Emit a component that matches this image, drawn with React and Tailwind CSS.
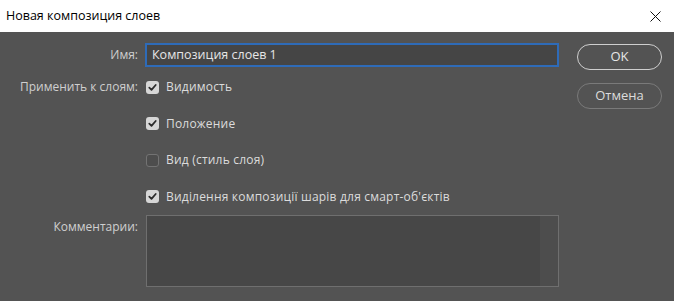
import { useState } from "react";

const OPTIONS = [
  { label: "Видимость", checked: true },
  { label: "Положение", checked: true },
  { label: "Вид (стиль слоя)", checked: false },
  { label: "Виділення композиції шарів для смарт-об'єктів", checked: true },
];

function Check({ checked }) {
  if (!checked) {
    return (
      <span className="w-[13px] h-[13px] rounded-[3px] border border-[#737373] bg-[#4d4d4d] shrink-0" />
    );
  }
  return (
    <span className="w-[13px] h-[13px] rounded-[3px] bg-[#d6d6d6] shrink-0 flex items-center justify-center">
      <svg width="9" height="9" viewBox="0 0 9 9" fill="none">
        <path d="M1.3 4.6L3.5 6.8L7.7 2" stroke="#2b2b2b" strokeWidth="1.8" strokeLinecap="round" strokeLinejoin="round" />
      </svg>
    </span>
  );
}

export default function App() {
  const [name, setName] = useState("Композиция слоев 1");
  const [opts, setOpts] = useState(OPTIONS);

  return (
    <div className="w-[674px] h-[301px] overflow-hidden flex flex-col font-['Open_Sans',sans-serif]">
      {/* Title bar */}
      <div className="h-[32px] bg-white flex items-center justify-between pl-[6px] pr-[12px] shrink-0">
        <span className="text-[12.5px] text-black">Новая композиция слоев</span>
        <svg width="11" height="11" viewBox="0 0 11 11" className="mr-[1px]">
          <path d="M0.5 0.5L10.5 10.5M10.5 0.5L0.5 10.5" stroke="#111" strokeWidth="1" />
        </svg>
      </div>

      {/* Body */}
      <div className="flex-1 bg-[#535353] flex text-[12px] text-[#d4d4d4]">
        <div className="flex-1 flex flex-col">
          {/* Name */}
          <div className="flex items-center mt-[11px] h-[24px]">
            <span className="w-[145px] text-right pr-[7px] text-[#cfcfcf]">Имя:</span>
            <div className="w-[414px] h-[24px] border-2 border-[#2e6bb8] bg-[#454545] flex items-center px-[5px]">
              <input
                value={name}
                onChange={(e) => setName(e.target.value)}
                className="bg-transparent outline-none w-full text-[12.5px] text-[#e6e6e6]"
              />
            </div>
          </div>

          {/* Apply to layers */}
          <div className="flex mt-[12px]">
            <span className="w-[146px] text-right pr-[8px] text-[#cfcfcf] leading-[16px]">Применить к слоям:</span>
            <div className="flex flex-col gap-[20.5px]">
              {opts.map((o, i) => (
                <label
                  key={o.label}
                  className="flex items-center gap-[7px] h-[16px] cursor-pointer"
                  onClick={() =>
                    setOpts(opts.map((x, j) => (j === i ? { ...x, checked: !x.checked } : x)))
                  }
                >
                  <Check checked={o.checked} />
                  <span className="text-[#dcdcdc] tracking-[0.2px]">{o.label}</span>
                </label>
              ))}
            </div>
          </div>

          {/* Comments */}
          <div className="flex mt-[10px]">
            <span className="w-[146px] text-right pr-[8px] pt-[3px] text-[#cfcfcf]">Комментарии:</span>
            <div className="w-[413px] h-[72px] border border-[#6f6f6f] bg-[#474747] flex">
              <div className="flex-1" />
              <div className="w-[18px] bg-[#4d4d4d]" />
            </div>
          </div>
        </div>

        {/* Buttons */}
        <div className="w-[97px] flex flex-col pt-[12px] pr-[12px] items-end gap-[13px] shrink-0">
          <button className="w-[85px] h-[26px] rounded-full border-[1.5px] border-[#cfcfcf] text-[13px] text-[#e6e6e6]">
            OK
          </button>
          <button className="w-[85px] h-[26px] rounded-full border-[1.5px] border-[#7a7a7a] text-[13px] text-[#dcdcdc]">
            Отмена
          </button>
        </div>
      </div>
    </div>
  );
}
